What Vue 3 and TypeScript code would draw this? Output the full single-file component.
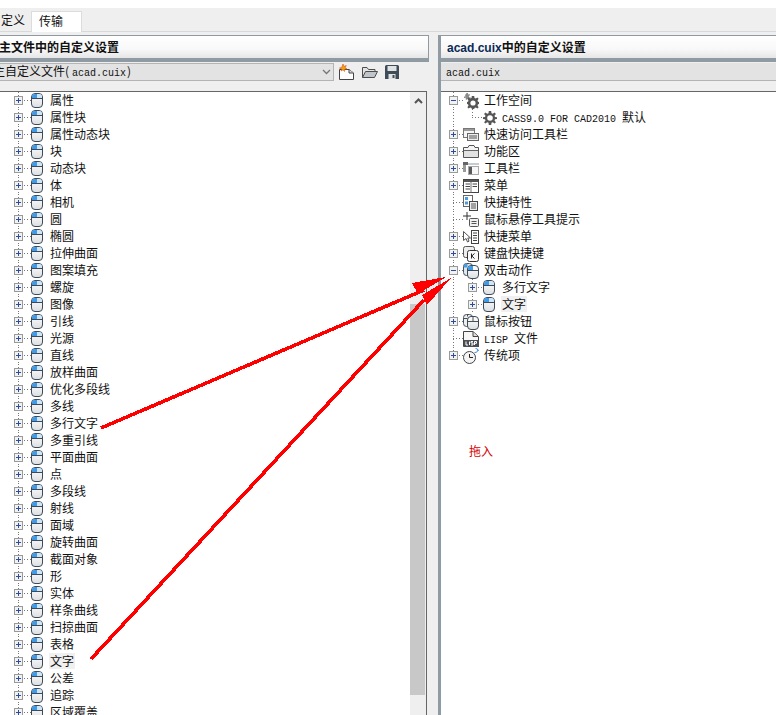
<script setup lang="ts">
interface Row {
  label: string
  icon: string
  toggle?: 'plus' | 'minus' | 'none'
  kind?: string
  highlight?: boolean
  latin?: string
}

const leftLabels: string[] = [
  '属性', '属性块', '属性动态块', '块', '动态块', '体', '相机', '圆', '椭圆', '拉伸曲面',
  '图案填充', '螺旋', '图像', '引线', '光源', '直线', '放样曲面', '优化多段线', '多线', '多行文字',
  '多重引线', '平面曲面', '点', '多段线', '射线', '面域', '旋转曲面', '截面对象', '形', '实体',
  '样条曲线', '扫掠曲面', '表格', '文字', '公差', '追踪', '区域覆盖'
]

const rightRows: Row[] = [
  { label: '工作空间', icon: 'gears', toggle: 'minus' },
  { label: '默认', latin: 'CASS9.0 FOR CAD2010 ', icon: 'gear', kind: 'leaf' },
  { label: '快速访问工具栏', icon: 'qat', toggle: 'plus' },
  { label: '功能区', icon: 'ribbon', toggle: 'plus' },
  { label: '工具栏', icon: 'toolbar', toggle: 'plus' },
  { label: '菜单', icon: 'menu', toggle: 'plus' },
  { label: '快捷特性', icon: 'props', toggle: 'none' },
  { label: '鼠标悬停工具提示', icon: 'tip', toggle: 'none' },
  { label: '快捷菜单', icon: 'shortcut', toggle: 'plus' },
  { label: '键盘快捷键', icon: 'keys', toggle: 'plus' },
  { label: '双击动作', icon: 'dbl', toggle: 'minus' },
  { label: '多行文字', icon: 'mouse', kind: 'child' },
  { label: '文字', icon: 'mouse', kind: 'child', highlight: true },
  { label: '鼠标按钮', icon: 'mice', toggle: 'plus' },
  { label: '文件', latin: 'LISP ', icon: 'lisp', toggle: 'none' },
  { label: '传统项', icon: 'clock', toggle: 'plus', kind: 'last' }
]
</script>

<template>
  <div class="page">
    <svg class="defs" aria-hidden="true">
      <defs>
        <linearGradient id="body" x1="0" y1="0" x2="0" y2="1">
          <stop offset="0" stop-color="#ffffff" />
          <stop offset="1" stop-color="#dcdfe2" />
        </linearGradient>
      </defs>
      <symbol id="mouse" viewBox="0 0 12 15">
        <rect x="0.5" y="0.5" width="11" height="14" rx="3.5" fill="url(#body)" stroke="#3e4a55" />
        <path d="M1 5.500V4A3 3 0 0 1 4 1H6V5.500Z" fill="#3d9be9" />
        <path d="M6 1H8A3 3 0 0 1 11 4V5.500H6Z" fill="#cfe6f8" />
        <path d="M1 5.500H11" stroke="#3e4a55" fill="none" />
      </symbol>
      <symbol id="dbl" viewBox="0 0 16 16">
        <rect x="0.5" y="0.5" width="9" height="12" rx="3" fill="#dfe8ef" stroke="#46505a" />
        <rect x="4.5" y="2.5" width="11" height="13" rx="3.500" fill="url(#body)" stroke="#3e4a55" />
        <path d="M1 4.500V3.500A2.500 2.500 0 0 1 3.500 1H4.500V2.500L4 4.500ZM5 7V6A3 3 0 0 1 8 3H10V7Z" fill="#3d9be9" />
        <path d="M5 7.500H15" stroke="#3e4a55" fill="none" />
      </symbol>
      <symbol id="mice" viewBox="0 0 16 16">
        <rect x="0.5" y="0.5" width="9" height="12" rx="3" fill="#eeeeee" stroke="#46505a" />
        <rect x="4.5" y="2.5" width="11" height="13" rx="3.500" fill="url(#body)" stroke="#3e4a55" />
        <path d="M5 7.500H15M10 3V7.500M1 4.500H4.500M4.500 1V2.500" stroke="#46505a" fill="none" />
      </symbol>
      <symbol id="gear" viewBox="0 0 14 14">
        <path d="M5.800 0H8.200L8.500 2.200 9.800 2.800 11.600 1.500 12.900 2.900 11.500 4.700 12 6 14 6.200V8L12 8.300 11.500 9.500 12.900 11.200 11.600 12.500 9.800 11.300 8.500 11.800 8.200 14H5.800L5.500 11.800 4.200 11.300 2.400 12.500 1.100 11.200 2.500 9.500 2 8.300 0 8V6.200L2 6 2.500 4.700 1.100 2.900 2.400 1.500 4.200 2.800 5.500 2.200Z" fill="#565656" />
        <circle cx="7" cy="7" r="2.800" fill="#fff" />
      </symbol>
      <symbol id="gears" viewBox="0 0 16 16">
        <path d="M3.500 0H5V1.500L6.500 1 7 2.200 5.800 3 6.500 4.500H8V5.500H6.500L5.800 6.500 4.500 5.800 3.500 7 2.500 6 3 4.800 1 5V3.500H2.500L2 2 3 1Z" fill="#8b8b8b" />
        <path d="M8.800 3H11.200L11.500 5 12.800 5.600 14.400 4.500 15.600 5.800 14.500 7.500 15 8.800 16 9V11L15 11.200 14.500 12.500 15.600 14.200 14.400 15.500 12.800 14.400 11.500 15 11.200 16H8.800L8.500 15 7.200 14.400 5.600 15.500 4.400 14.200 5.500 12.500 5 11.200 4 11V9L5 8.800 5.500 7.500 4.400 5.800 5.600 4.500 7.200 5.600 8.500 5Z" fill="#565656" />
        <circle cx="10" cy="10" r="2.600" fill="#fff" />
      </symbol>
      <symbol id="qat" viewBox="0 0 16 16">
        <rect x="0.500" y="1.500" width="11" height="9" fill="#f6f6f6" stroke="#777" />
        <rect x="1" y="2" width="10" height="2" fill="#9a9a9a" />
        <rect x="4.500" y="6.500" width="11" height="7" fill="#eee" stroke="#666" />
        <path d="M6 9H14M6 11H14" stroke="#555" />
      </symbol>
      <symbol id="ribbon" viewBox="0 0 16 16">
        <path d="M0.500 13.500V3.500H5L6 1.500H11L12 3.500H15.500V13.500Z" fill="#f4f4f4" stroke="#555" />
        <path d="M1 6.500H15" stroke="#666" />
        <rect x="1" y="7" width="14" height="6" fill="#e2e2e2" />
      </symbol>
      <symbol id="toolbar" viewBox="0 0 16 16">
        <rect x="0" y="1" width="5" height="3" fill="#666" />
        <rect x="5" y="2" width="11" height="2" fill="#c4ccd3" />
        <rect x="0" y="4" width="3" height="7" fill="#9a9a9a" />
        <rect x="5.500" y="5.500" width="10" height="8" fill="#f7f7f7" stroke="#a8a8a8" />
        <rect x="6" y="6" width="3" height="7" fill="#5a5a5a" />
      </symbol>
      <symbol id="menu" viewBox="0 0 16 16">
        <rect x="0.500" y="1.500" width="15" height="13" fill="#fff" stroke="#444" />
        <rect x="1" y="2" width="14" height="2" fill="#555" />
        <path d="M2.500 6H7M2.500 8.500H7M2.500 11H7M9.500 6H14M9.500 8.500H14" stroke="#444" />
        <path d="M8 4V14.500" stroke="#777" />
      </symbol>
      <symbol id="props" viewBox="0 0 16 16">
        <rect x="0.500" y="0.500" width="9" height="11" fill="#fff" stroke="#666" />
        <rect x="2" y="2" width="3" height="3" fill="#4a9be0" />
        <rect x="2" y="6.500" width="3" height="3" fill="#4a9be0" />
        <rect x="6.500" y="6.500" width="8" height="9" fill="#eee" stroke="#444" />
        <path d="M8 9H13M8 11H13M8 13H13" stroke="#555" />
      </symbol>
      <symbol id="tip" viewBox="0 0 16 16">
        <path d="M4 0V8M0 4H8" stroke="#333" />
        <rect x="6.500" y="6.500" width="9" height="8" rx="1" fill="#f1f1f1" stroke="#555" />
        <path d="M8.500 9.500H13.500M8.500 11.500H13.500" stroke="#555" />
      </symbol>
      <symbol id="shortcut" viewBox="0 0 16 16">
        <path d="M0.500 2.500V11.500L3 9.500 4.500 13 6 12.200 4.800 9H7.500Z" fill="#fff" stroke="#555" />
        <rect x="8.500" y="1.500" width="7" height="13" fill="#fff" stroke="#444" />
        <path d="M10 4H14M10 6.500H14M10 9H14M10 11.500H14" stroke="#444" />
      </symbol>
      <symbol id="keys" viewBox="0 0 16 16">
        <rect x="0.500" y="0.500" width="11" height="11" rx="2" fill="#eee" stroke="#555" />
        <rect x="4.500" y="4.500" width="11" height="11" rx="2" fill="#f8f8f8" stroke="#333" />
        <path d="M8.500 7.500V12.500M11.500 7.500L8.800 10 11.500 12.500" stroke="#222" fill="none" />
      </symbol>
      <symbol id="lisp" viewBox="0 0 16 16">
        <path d="M0.500 0.500H10L15.500 5.500V15.500H0.500Z" fill="#f6f6f6" stroke="#444" />
        <path d="M10 1V5.500H15" fill="#ddd" stroke="#444" />
        <rect x="1" y="9" width="15" height="7" fill="#4b4f54" />
        <path d="M3 10.500V14H5M6.500 10.500V14M10 10.500H8V12H10V14H8M11.500 14V10.500H13.500V12.300H11.500" stroke="#fff" fill="none" />
      </symbol>
      <symbol id="clock" viewBox="0 0 16 16">
        <circle cx="6.500" cy="9.500" r="6" fill="#f4f4f4" stroke="#444" />
        <path d="M6.500 6V9.500H10" stroke="#222" fill="none" />
        <path d="M11.500 4.500C14 4.500 15 3.500 14.500 1.500M12.500 0.500L14.500 1 15.500 3" stroke="#3d8fe0" fill="none" />
      </symbol>
      <symbol id="new" viewBox="0 0 17 17">
        <path d="M1.500 5.500H11L15.500 9V15.500H1.500Z" fill="#fff" stroke="#444" />
        <path d="M11 5.500V9H15.500" fill="#ddd" stroke="#444" />
        <path d="M5 0L6 2.400 8.300 1.500 7.200 3.600 9 5 6.800 5.300 6.500 7.500 5 5.800 3 7 3.600 5 1.500 4 3.700 3.400Z" fill="#f0a20a" stroke="#d23c0a" stroke-width="0.500" />
      </symbol>
      <symbol id="open" viewBox="0 0 16 14">
        <path d="M0.500 12.500V2.500H5L6.500 4.500H13V6.500" fill="#e4e4e4" stroke="#4c4c4c" />
        <path d="M0.500 12.500L3.500 6.500H15.500L12.500 12.500Z" fill="#bfc5ca" stroke="#4c4c4c" />
      </symbol>
      <symbol id="save" viewBox="0 0 14 14">
        <path d="M0 1.500A1.500 1.500 0 0 1 1.500 0H12.500A1.500 1.500 0 0 1 14 1.500V14H0Z" fill="#3f4b57" />
        <rect x="2.500" y="1" width="9" height="5" fill="#dfe3e6" />
        <rect x="3.500" y="9" width="7" height="5" fill="#dfe3e6" />
        <rect x="7.500" y="10" width="2" height="3" fill="#3f4b57" />
      </symbol>
    </svg>

    <div class="blank"></div>
    <div class="tabs">
      <span class="tab-off">定义</span>
      <span class="tab-on">传输</span>
    </div>

    <div class="columns">
      <section class="panel left">
        <h2 class="title title-left">主文件中的自定义设置</h2>
        <div class="combo-row">
          <div class="combo">
            <span class="combo-text">主自定义文件(<span class="latin latin-paren">acad.cuix</span>)</span>
            <svg class="chev" width="9" height="6" viewBox="0 0 9 6"><path d="M1 1L4.500 4.500 8 1" fill="none" stroke="#777" stroke-width="1.300" /></svg>
          </div>
          <div class="tools">
            <svg width="17" height="17"><use href="#new" /></svg>
            <svg width="16" height="14"><use href="#open" /></svg>
            <svg width="14" height="14"><use href="#save" /></svg>
          </div>
        </div>
        <div class="tree tree-left">
          <ul class="list">
            <li v-for="label in leftLabels" :key="label" class="row">
              <span class="gut gut-left line-v line-h"><i class="box plus"></i></span>
              <svg class="ico-m" width="12" height="15"><use href="#mouse" /></svg>
              <span class="txt txt-left" :class="{ hl: label === '文字' }">{{ label }}</span>
            </li>
          </ul>
          <div class="scroll">
            <div class="scroll-head">
              <svg width="9" height="6" viewBox="0 0 9 6"><path d="M1 5L4.500 1.500 8 5" fill="none" stroke="#555" stroke-width="2" /></svg>
            </div>
            <div class="scroll-track"></div>
            <div class="scroll-thumb"></div>
          </div>
        </div>
      </section>

      <section class="panel right">
        <h2 class="title title-right"><span class="t-latin">acad.cuix</span>中的自定义设置</h2>
        <div class="combo-row-r"><span class="latin">acad.cuix</span></div>
        <div class="tree tree-right">
          <ul class="list">
            <li v-for="r in rightRows" :key="r.label" class="row">
              <template v-if="r.kind === 'child'">
                <span class="gut gut-right line-v"></span>
                <span class="gut gut-sub line-v line-h"><i class="box plus"></i></span>
                <svg class="ico-m" width="12" height="15"><use href="#mouse" /></svg>
              </template>
              <template v-else-if="r.kind === 'leaf'">
                <span class="gut gut-right line-v"></span>
                <span class="gut gut-sub line-l"></span>
                <svg class="ico-m" width="14" height="14"><use href="#gear" /></svg>
              </template>
              <template v-else>
                <span class="gut gut-right line-h" :class="r.kind === 'last' ? 'line-end' : 'line-v'">
                  <i v-if="r.toggle !== 'none'" class="box" :class="r.toggle"></i>
                </span>
                <svg class="ico-r" width="16" height="16"><use :href="'#' + r.icon" /></svg>
              </template>
              <span
                class="txt"
                :class="[r.kind === 'child' ? 'txt-sub' : r.kind === 'leaf' ? 'txt-leaf' : 'txt-top', { hl: r.highlight }]"
              ><span v-if="r.latin" class="latin latin-pre">{{ r.latin }}</span>{{ r.label }}</span>
            </li>
          </ul>
          <p class="note">拖入</p>
        </div>
      </section>
    </div>

    <svg class="arrows" width="776" height="715" viewBox="0 0 776 715">
      <path d="M101 428L424 290" stroke="#f00" stroke-width="3.600" fill="none" shape-rendering="crispEdges" />
      <path d="M446 277L412 283 418 294Z" fill="#f00" shape-rendering="crispEdges" />
      <path d="M91 659L424 300" stroke="#f00" stroke-width="3.600" fill="none" shape-rendering="crispEdges" />
      <path d="M451 278L422 295 427 305Z" fill="#f00" shape-rendering="crispEdges" />
    </svg>
  </div>
</template>

<style scoped>
.page {
  position: relative;
  width: 776px;
  height: 715px;
  overflow: hidden;
  display: flex;
  flex-direction: column;
  background: #efefef;
  font-family: "Noto Sans CJK SC", "Liberation Sans", sans-serif;
  font-size: 12px;
  color: #111;
}
.defs { position: absolute; width: 0; height: 0; }
.blank { height: 8px; background: #fff; flex: none; }
.tabs {
  flex: none;
  height: 24px;
  box-sizing: border-box;
  border-bottom: 1px solid #d8d8d8;
  display: flex;
  align-items: flex-end;
}
.tab-off { width: 31px; height: 20px; line-height: 18px; box-sizing: border-box; padding-left: 1px; }
.tab-on {
  width: 51px;
  height: 21px;
  margin-bottom: -1px;
  box-sizing: border-box;
  border: 1px solid #dcdcdc;
  border-bottom: 0;
  background: #fff;
  padding-left: 7px;
  line-height: 17px;
}
.columns {
  margin-top: 3px;
  flex: 1;
  min-height: 0;
  display: grid;
  grid-template-columns: 429px 338px;
  column-gap: 9px;
}
.panel { min-width: 0; min-height: 0; display: flex; flex-direction: column; }
.right { border-left: 3px solid #8f9aa3; width: 338px; box-sizing: border-box; }
.title {
  margin: 0;
  flex: none;
  height: 27px;
  box-sizing: border-box;
  border-top: 1px solid #8f9aa3;
  border-bottom: 4px solid #8f9aa3;
  background: linear-gradient(#fff, #f8f8f8 60%, #e6e6e6);
  font-size: 12px;
  font-weight: 700;
  line-height: 21px;
  white-space: nowrap;
  overflow: hidden;
}
.title-left { border-right: 1px solid #8f9aa3; text-indent: -1px; }
.title-right { padding-left: 6px; }
.t-latin { font-family: "Liberation Sans", sans-serif; color: #0a2a55; }
.combo-row { flex: none; height: 28px; margin-top: 1px; display: flex; align-items: flex-start; }
.combo {
  width: 334px;
  height: 18px;
  box-sizing: border-box;
  background: #e3e3e3;
  border: 1px solid #b4b4b4;
  border-left: 0;
  display: flex;
  align-items: center;
  justify-content: space-between;
  padding-right: 1px;
  overflow: hidden;
}
.combo-text { margin-left: -7px; white-space: nowrap; line-height: 16px; }
.chev { margin-right: 1px; flex: none; }
.latin { font-family: "Liberation Mono", monospace; font-size: 10px; }
.latin-paren { padding: 0 1px 0 3px; }
.latin-pre { white-space: pre; }
.tools { display: flex; align-items: center; margin-left: 4px; gap: 7px; height: 18px; }
.combo-row-r {
  flex: none;
  height: 18px;
  margin-top: 1px;
  margin-bottom: 10px;
  box-sizing: border-box;
  background: #e3e3e3;
  border-bottom: 1px solid #b4b4b4;
  padding-left: 5px;
  line-height: 16px;
}
.tree {
  flex: 1;
  min-height: 0;
  position: relative;
  background: #fff;
  border-top: 1px solid #666;
  overflow: hidden;
}
.tree-left { display: flex; border-right: 1px solid #666; margin-right: 2px; }
.list { list-style: none; margin: 0; padding: 0; flex: 1; min-width: 0; }
.tree-left .list { padding-left: 9px; }
.tree-right .list { padding-left: 3px; }
.row { height: 17px; display: flex; align-items: center; white-space: nowrap; }
.gut {
  flex: none;
  height: 17px;
  display: flex;
  align-items: center;
  background-repeat: no-repeat;
}
.gut-left { width: 22px; }
.gut-right { width: 19px; }
.gut-sub { width: 20px; }
.line-v { background-image: repeating-linear-gradient(#777 0 1px, transparent 1px 3px); background-size: 1px 100%; background-position: 9px 0; }
.line-h { position: relative; }
.line-h::after {
  content: "";
  position: absolute;
  left: 9px;
  right: 0;
  top: 8px;
  height: 1px;
  background: repeating-linear-gradient(90deg, #777 0 1px, transparent 1px 3px);
}
.line-end { background-image: repeating-linear-gradient(#777 0 1px, transparent 1px 3px); background-size: 1px 9px; background-position: 9px 0; }
.line-l { position: relative; }
.line-l::before {
  content: "";
  position: absolute;
  left: 9px;
  top: 0;
  height: 9px;
  width: 1px;
  background: repeating-linear-gradient(#777 0 1px, transparent 1px 3px);
}
.line-l::after {
  content: "";
  position: absolute;
  left: 9px;
  right: 0;
  top: 8px;
  height: 1px;
  background: repeating-linear-gradient(90deg, #777 0 1px, transparent 1px 3px);
}
.box {
  position: relative;
  z-index: 1;
  box-sizing: border-box;
  width: 9px;
  height: 9px;
  margin-left: 5px;
  border: 1px solid #9a9a9a;
  background: #f2f2f2;
}
.box::before {
  content: "";
  position: absolute;
  left: 1px;
  top: 3px;
  width: 5px;
  height: 1px;
  background: #2a4d9c;
}
.plus::after {
  content: "";
  position: absolute;
  left: 3px;
  top: 1px;
  width: 1px;
  height: 5px;
  background: #2a4d9c;
}
.ico-m, .ico-r { flex: none; }
.txt { line-height: 16px; height: 16px; padding: 0 1px; position: relative; top: -1px; }
.txt-left { margin-left: 6px; }
.txt-top { margin-left: 4px; }
.txt-sub { margin-left: 6px; }
.txt-leaf { margin-left: 4px; }
.hl { background: #f0f0f0; }
.scroll { flex: none; width: 16px; position: relative; background: #efefef; display: flex; flex-direction: column; }
.scroll-head { height: 17px; display: flex; align-items: center; justify-content: center; }
.scroll-track { height: 195px; }
.scroll-thumb { height: 391px; width: 15px; background: #c8c8c8; }
.note { margin: 0; padding: 79px 0 0 28px; color: #d40000; line-height: 16px; }
.arrows { position: absolute; left: 0; top: 0; pointer-events: none; }
</style>
